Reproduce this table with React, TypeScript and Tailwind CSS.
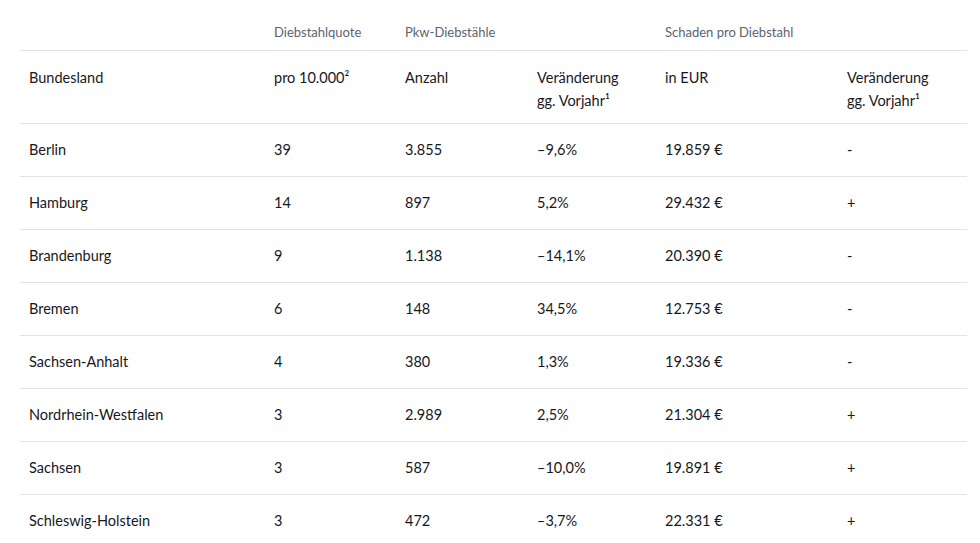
const rows = [
  ["Berlin", "39", "3.855", "–9,6%", "19.859 €", "-"],
  ["Hamburg", "14", "897", "5,2%", "29.432 €", "+"],
  ["Brandenburg", "9", "1.138", "–14,1%", "20.390 €", "-"],
  ["Bremen", "6", "148", "34,5%", "12.753 €", "-"],
  ["Sachsen-Anhalt", "4", "380", "1,3%", "19.336 €", "-"],
  ["Nordrhein-Westfalen", "3", "2.989", "2,5%", "21.304 €", "+"],
  ["Sachsen", "3", "587", "–10,0%", "19.891 €", "+"],
  ["Schleswig-Holstein", "3", "472", "–3,7%", "22.331 €", "+"],
];

export default function App() {
  return (
    <div className="min-h-screen bg-white pl-[20px] font-['Lato','Liberation_Sans',sans-serif] text-[#16181d]">
      <table className="w-[947px] table-fixed border-collapse text-left">
        <colgroup>
          <col className="w-[245px]" />
          <col className="w-[131px]" />
          <col className="w-[132px]" />
          <col className="w-[128px]" />
          <col className="w-[182px]" />
          <col className="w-[129px]" />
        </colgroup>
        <thead>
          <tr className="border-b border-[#e3e3e3] text-[13px] leading-[22px] text-[#5c6370]">
            <th className="pl-[9px] pt-[21px] pb-[7px] font-normal"></th>
            <th className="pl-[9px] pt-[21px] pb-[7px] font-normal">Diebstahlquote</th>
            <th colSpan={2} className="pl-[9px] pt-[21px] pb-[7px] font-normal">Pkw-Diebstähle</th>
            <th colSpan={2} className="pl-[9px] pt-[21px] pb-[7px] font-normal">Schaden pro Diebstahl</th>
          </tr>
          <tr className="border-b border-[#e3e3e3] text-[14.5px] leading-[23px] align-top">
            <th className="pl-[9px] pt-[15px] pb-[11px] font-normal">Bundesland</th>
            <th className="pl-[9px] pt-[15px] pb-[11px] font-normal">pro 10.000²</th>
            <th className="pl-[9px] pt-[15px] pb-[11px] font-normal">Anzahl</th>
            <th className="pl-[9px] pt-[15px] pb-[11px] font-normal">
              Veränderung
              <br />
              gg. Vorjahr¹
            </th>
            <th className="pl-[9px] pt-[15px] pb-[11px] font-normal">in EUR</th>
            <th className="pl-[9px] pt-[15px] pb-[11px] font-normal">
              Veränderung
              <br />
              gg. Vorjahr¹
            </th>
          </tr>
        </thead>
        <tbody>
          {rows.map((r) => (
            <tr key={r[0]} className="border-b border-[#e3e3e3] text-[14.5px] leading-[22px]">
              {r.map((c, i) => (
                <td key={i} className="pl-[9px] py-[15px]">
                  {c}
                </td>
              ))}
            </tr>
          ))}
        </tbody>
      </table>
    </div>
  );
}
